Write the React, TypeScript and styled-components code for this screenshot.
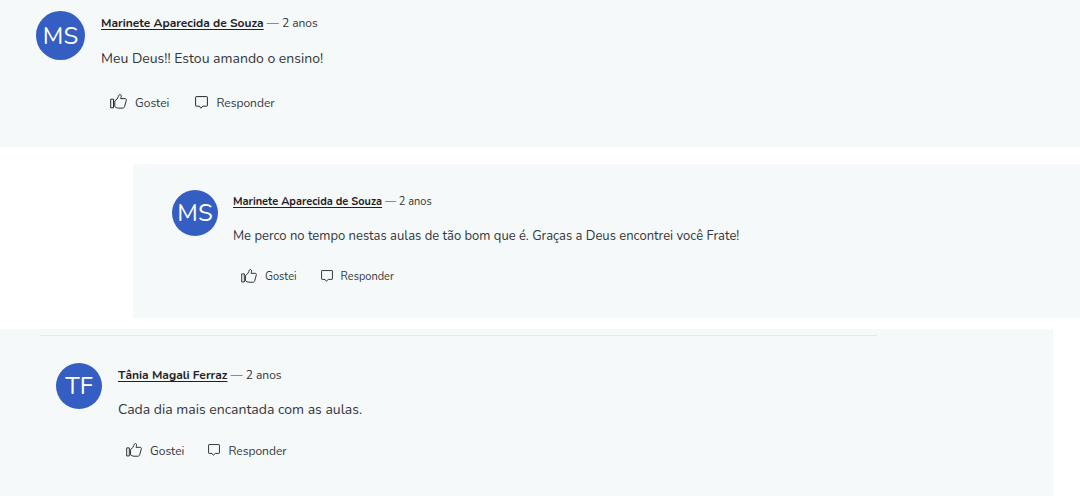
import React from "react";
import styled, { createGlobalStyle, css } from "styled-components";

const GlobalStyle = createGlobalStyle`
  * { box-sizing: border-box; }
  body {
    margin: 0;
    background: #ffffff;
    color: #33363a;
    font-family: Nunito, Lato, "Open Sans", sans-serif;
  }
`;

type Size = "large" | "medium" | "small";

const sizes = {
  large: { avatar: 49, meta: 12, body: 14, action: 12, above: 16, below: 24, indent: 9, gap: 16, between: 26 },
  medium: { avatar: 46, meta: 12, body: 14, action: 12, above: 15, below: 21, indent: 8, gap: 16, between: 24 },
  small: { avatar: 46, meta: 11, body: 13, action: 11, above: 14, below: 21, indent: 8, gap: 15, between: 24 },
};

const Page = styled.main`
  display: flex;
  flex-direction: column;
`;

const Panel = styled.section<{ $kind: "first" | "reply" | "last" }>`
  background: #f5f9fa;
  ${({ $kind }) =>
    $kind === "first" &&
    css`
      padding: 11px 36px 34px;
    `}
  ${({ $kind }) =>
    $kind === "reply" &&
    css`
      margin: 17px 0 11px 133px;
      padding: 26px 39px 31px;
    `}
  ${({ $kind }) =>
    $kind === "last" &&
    css`
      margin-right: 27px;
      padding: 6px 176px 35px 40px;
    `}
`;

const Divider = styled.hr`
  margin: 0 0 27px;
  border: 0;
  border-top: 1px solid #e4eaec;
`;

const Comment = styled.article<{ $size: Size; $indent?: boolean }>`
  display: flex;
  align-items: flex-start;
  gap: ${({ $size }) => sizes[$size].gap}px;
  padding-left: ${({ $indent }) => ($indent ? "16px" : "0")};
`;

const Avatar = styled.div<{ $size: Size }>`
  display: flex;
  flex: none;
  align-items: center;
  justify-content: center;
  width: ${({ $size }) => sizes[$size].avatar}px;
  height: ${({ $size }) => sizes[$size].avatar}px;
  border-radius: 50%;
  background: #355ec3;
  color: #ffffff;
  font-size: 24px;
  line-height: 24px;
`;

const Content = styled.div`
  flex: 1;
  min-width: 0;
`;

const Meta = styled.div<{ $size: Size }>`
  padding-top: 2px;
  font-size: ${({ $size }) => sizes[$size].meta}px;
  line-height: 20px;
`;

const Author = styled.a`
  color: #1f2126;
  font-weight: 700;
  text-decoration: underline;
  text-underline-offset: 2px;
`;

const Message = styled.p<{ $size: Size }>`
  margin: ${({ $size }) => `${sizes[$size].above}px 0 ${sizes[$size].below}px`};
  font-size: ${({ $size }) => sizes[$size].body}px;
  line-height: 20px;
`;

const Actions = styled.div<{ $size: Size }>`
  display: flex;
  align-items: center;
  gap: ${({ $size }) => sizes[$size].between}px;
  padding-left: ${({ $size }) => sizes[$size].indent}px;
`;

const Action = styled.button<{ $size: Size }>`
  display: flex;
  align-items: center;
  gap: 8px;
  padding: 0;
  border: 0;
  background: none;
  color: inherit;
  font-family: inherit;
  font-size: ${({ $size }) => sizes[$size].action}px;
  line-height: 20px;
  cursor: pointer;
`;

const Glyph = styled.svg`
  flex: none;
  margin-bottom: 2px;
  fill: none;
  stroke: #26292d;
  stroke-linejoin: round;
`;

function ThumbIcon({ size }: { size: Size }) {
  const large = size === "large";
  return (
    <Glyph width={large ? 17 : 16} height={large ? 16 : 15} viewBox="0 0 17 16" aria-hidden="true">
      <path d="M.7 5.2h2.8v8.6H.7z" />
      <path d="M4.8 6.9Q7.6 5.3 8.4 2.5C8.7 1.1 9.2.6 10 .6c.9 0 1.4.7 1.3 1.7-.1.9-.4 1.5-.7 2.3h4.3c1.2 0 1.7.7 1.4 1.7l-1.7 6.2c-.3 1.1-1 1.6-2 1.6H8.4c-1.4 0-2.6-.6-3.6-1.5z" />
    </Glyph>
  );
}

function BubbleIcon({ size }: { size: Size }) {
  const large = size === "large";
  return (
    <Glyph width={large ? 13 : 12} height={large ? 13 : 12} viewBox="0 0 13 13" aria-hidden="true">
      <path d="M1.2.6h10.6q.6 0 .6.6v8.4q0 .6-.6.6H7.9L5.8 12.2 4.4 10.2H1.2q-.6 0-.6-.6V1.2q0-.6.6-.6z" />
    </Glyph>
  );
}

interface CommentProps {
  initials: string;
  author: string;
  text: string;
  size: Size;
  indent?: boolean;
}

function CommentItem({ initials, author, text, size, indent }: CommentProps) {
  return (
    <Comment $size={size} $indent={indent}>
      <Avatar $size={size}>{initials}</Avatar>
      <Content>
        <Meta $size={size}>
          <Author href="#">{author}</Author> — 2 anos
        </Meta>
        <Message $size={size}>{text}</Message>
        <Actions $size={size}>
          <Action type="button" $size={size}>
            <ThumbIcon size={size} />
            Gostei
          </Action>
          <Action type="button" $size={size}>
            <BubbleIcon size={size} />
            Responder
          </Action>
        </Actions>
      </Content>
    </Comment>
  );
}

export default function App() {
  return (
    <Page>
      <GlobalStyle />
      <Panel $kind="first">
        <CommentItem
          initials="MS"
          author="Marinete Aparecida de Souza"
          text="Meu Deus!! Estou amando o ensino!"
          size="large"
        />
      </Panel>
      <Panel $kind="reply">
        <CommentItem
          initials="MS"
          author="Marinete Aparecida de Souza"
          text="Me perco no tempo nestas aulas de tão bom que é. Graças a Deus encontrei você Frate!"
          size="small"
        />
      </Panel>
      <Panel $kind="last">
        <Divider />
        <CommentItem
          initials="TF"
          author="Tânia Magali Ferraz"
          text="Cada dia mais encantada com as aulas."
          size="medium"
          indent
        />
      </Panel>
    </Page>
  );
}
